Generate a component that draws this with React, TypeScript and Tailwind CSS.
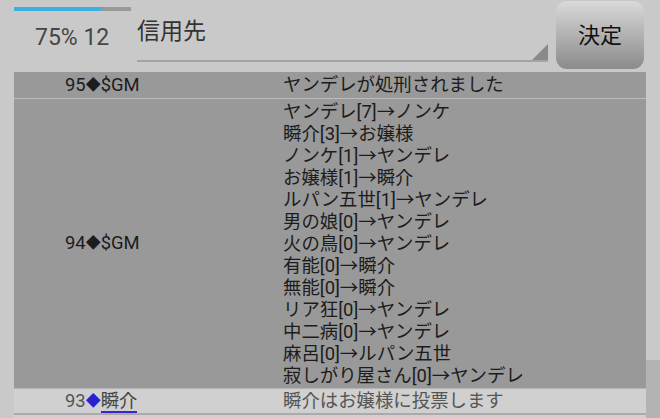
import React from 'react';

const FONT = { fontFamily: 'Roboto, "Noto Sans CJK JP", sans-serif' };

const VOTES = [
    'ヤンデレ[7]→ノンケ',
    '瞬介[3]→お嬢様',
    'ノンケ[1]→ヤンデレ',
    'お嬢様[1]→瞬介',
    'ルパン五世[1]→ヤンデレ',
    '男の娘[0]→ヤンデレ',
    '火の鳥[0]→ヤンデレ',
    '有能[0]→瞬介',
    '無能[0]→瞬介',
    'リア狂[0]→ヤンデレ',
    '中二病[0]→ヤンデレ',
    '麻呂[0]→ルパン五世',
    '寂しがり屋さん[0]→ヤンデレ',
];

const Diamond: React.FC<{ className?: string }> = ({ className = '' }) => (
    <span className={`text-[15px] leading-none ${className}`}>◆</span>
);

export default function App() {
    return (
        <div className="w-[660px] h-[418px] overflow-hidden bg-[#c9c9c9] text-[#1c1c1c]" style={FONT}>
            {/* header */}
            <div className="flex h-[72px] pl-[14px]">
                <div className="w-[123px] flex flex-col">
                    <div className="mt-[7px] w-[117px] h-[4px] bg-[#999999] flex">
                        <div className="w-[87px] h-full bg-[#3cb0e2]" />
                    </div>
                    <div className="mt-[15px] pl-[21px] text-[23px] leading-none text-[#454545] whitespace-nowrap">75% 12</div>
                </div>
                <div className="relative w-[411px] h-[62px] border-b-2 border-[#a3a3a3]">
                    <div className="pt-[20px] text-[23px] leading-none text-[#333333]">信用先</div>
                    <div className="absolute right-0 bottom-0 w-0 h-0 border-l-[16px] border-l-transparent border-b-[16px] border-b-[#8a8a8a]" />
                </div>
                <button className="ml-[8px] mt-[1px] w-[88px] h-[68px] rounded-[11px] bg-gradient-to-b from-[#dadada] to-[#8b8b8b] text-[22px] text-[#111111] flex items-center justify-center">
                    決定
                </button>
            </div>

            {/* log table */}
            <div className="flex">
                <div className="w-[632px] ml-[14px] text-[18.4px]">
                    <div className="flex h-[26px] items-center bg-[#999999] leading-none">
                        <div className="w-[269px] pl-[51px] flex items-center">95<Diamond />$GM</div>
                        <div>ヤンデレが処刑されました</div>
                    </div>
                    <div className="h-[1px] bg-[#bcbcbc]" />
                    <div className="flex items-center bg-[#999999] h-[289px]">
                        <div className="w-[269px] pl-[51px] leading-none flex items-center">94<Diamond />$GM</div>
                        <div className="flex flex-col leading-[22px] pt-[1px]">
                            {VOTES.map((v, i) => (
                                <div key={i}>{v}</div>
                            ))}
                        </div>
                    </div>
                    <div className="h-[1px] bg-[#b4b4b4]" />
                    <div className="flex h-[24px] items-center bg-[#d0d0d0] leading-none text-[#555555]">
                        <div className="w-[269px] pl-[51px] flex items-center">
                            93<Diamond className="text-[#2d1fd0]" />
                            <span className="border-b-2 border-[#3a26cc] text-[#444444] leading-[21px]">瞬介</span>
                        </div>
                        <div>瞬介はお嬢様に投票します</div>
                    </div>
                    <div className="h-[2px] bg-[#aaaaaa]" />
                    <div className="h-[10px] bg-[#d0d0d0]" />
                </div>
                <div className="flex-1 flex flex-col">
                    <div className="h-[288px]" />
                    <div className="flex-1 bg-[#b3b3b3]" />
                </div>
            </div>
        </div>
    );
}
